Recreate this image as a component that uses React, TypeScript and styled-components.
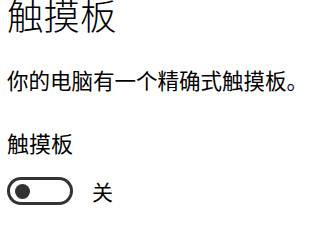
import styled, { createGlobalStyle } from "styled-components";

const GlobalStyle = createGlobalStyle`
  html, body {
    margin: 0;
    padding: 0;
    background: #ffffff;
  }
  body {
    font-family: "Noto Sans CJK SC", "Noto Sans", sans-serif;
    color: #000000;
  }
`;

const Page = styled.div`
  width: 313px;
  height: 209px;
  overflow: hidden;
  padding-left: 7px;
  box-sizing: border-box;
  display: flex;
  flex-direction: column;
`;

const Title = styled.h1`
  margin: -7px 0 0;
  font-size: 36.5px;
  font-weight: 300;
  line-height: 44px;
`;

const Description = styled.p`
  margin: 28px 0 0;
  font-size: 21.5px;
  font-weight: 400;
  line-height: 30px;
  white-space: nowrap;
`;

const Label = styled.div`
  margin-top: 32px;
  font-size: 22px;
  line-height: 30px;
`;

const ToggleRow = styled.div`
  margin-top: 20px;
  display: flex;
  align-items: center;
  gap: 19px;
`;

const Track = styled.div<{ $on: boolean }>`
  width: 66px;
  height: 28px;
  box-sizing: border-box;
  border: 3px solid #333333;
  border-radius: 14px;
  display: flex;
  align-items: center;
  justify-content: ${(p) => (p.$on ? "flex-end" : "flex-start")};
  padding: 0 5px;
`;

const Thumb = styled.div`
  width: 15px;
  height: 15px;
  border-radius: 50%;
  background: #333333;
`;

const State = styled.span`
  font-size: 21px;
  line-height: 28px;
`;

export default function App() {
  const on = false;
  return (
    <>
      <GlobalStyle />
      <Page>
        <Title>触摸板</Title>
        <Description>你的电脑有一个精确式触摸板。</Description>
        <Label>触摸板</Label>
        <ToggleRow>
          <Track $on={on}>
            <Thumb />
          </Track>
          <State>{on ? "开" : "关"}</State>
        </ToggleRow>
      </Page>
    </>
  );
}
